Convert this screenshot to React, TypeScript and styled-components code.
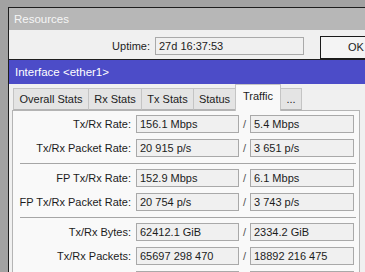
import React from 'react';
import styled, { createGlobalStyle } from 'styled-components';

const GlobalStyle = createGlobalStyle`
  html, body {
    margin: 0;
    padding: 0;
    background: #a2a2a2;
    overflow: hidden;
  }
  body {
    font-family: "Liberation Sans", Arial, sans-serif;
    font-size: 11px;
    color: #1c1c1c;
  }
`;

type Row = { label: string; tx: string; rx: string };

// last row only peeks in at the bottom edge, so its texts stay empty
const GROUPS: Row[][] = [
    [
        { label: 'Tx/Rx Rate:', tx: '156.1 Mbps', rx: '5.4 Mbps' },
        { label: 'Tx/Rx Packet Rate:', tx: '20 915 p/s', rx: '3 651 p/s' },
    ],
    [
        { label: 'FP Tx/Rx Rate:', tx: '152.9 Mbps', rx: '6.1 Mbps' },
        { label: 'FP Tx/Rx Packet Rate:', tx: '20 754 p/s', rx: '3 743 p/s' },
    ],
    [
        { label: 'Tx/Rx Bytes:', tx: '62412.1 GiB', rx: '2334.2 GiB' },
        { label: 'Tx/Rx Packets:', tx: '65697 298 470', rx: '18892 216 475' },
        { label: '', tx: '', rx: '' },
    ],
];

const TABS = ['Overall Stats', 'Rx Stats', 'Tx Stats', 'Status', 'Traffic', '...'];
const TAB_WIDTHS = [76, 54, 53, 43, 46, 22];

const Desktop = styled.div`
  position: relative;
  width: 365px;
  height: 272px;
  overflow: hidden;
`;

// windows sit on the desktop at their own coordinates
const Window = styled.div<{ left: number; top: number }>`
  position: absolute;
  left: ${({ left }) => left}px;
  top: ${({ top }) => top}px;
  width: 420px;
  height: 320px;
  border-top: 1px solid #1e1e1e;
  border-left: 1px solid #1e1e1e;
  background: #f0f0f0;
  display: flex;
  flex-direction: column;
`;

const TitleBar = styled.div<{ active?: boolean }>`
  height: ${({ active }) => active ? 24 : 22}px;
  display: flex;
  align-items: center;
  padding-left: ${({ active }) => active ? 6 : 5}px;
  background: ${({ active }) => active ? '#4c4cc8' : '#b7b7b7'};
  color: ${({ active }) => active ? '#ffffff' : '#f6f6f6'};
  font-size: 11.5px;
`;

const UptimeRow = styled.div`
  display: flex;
  align-items: flex-start;
  padding-top: 7px;
`;

const UptimeLabel = styled.div`
  width: 141px;
  margin-right: 5px;
  height: 18px;
  line-height: 18px;
  text-align: right;
`;

const Field = styled.div<{ width: number }>`
  box-sizing: border-box;
  width: ${({ width }) => width}px;
  height: 18px;
  line-height: 16px;
  padding-left: 3px;
  border: 1px solid #a9a9a9;
  background: #f0f0f0;
  white-space: nowrap;
  overflow: hidden;
`;

const OkButton = styled.div`
  box-sizing: border-box;
  margin-left: 16px;
  margin-top: -1px;
  width: 72px;
  height: 23px;
  line-height: 21px;
  text-align: center;
  border: 1px solid #1a1a1a;
  background: #f4f4f4;
`;

const Body = styled.div`
  display: flex;
  flex-direction: column;
  padding-left: 3px;
`;

const TabStrip = styled.div`
  display: flex;
  align-items: flex-end;
  height: 26px;
  padding-left: 1px;
  position: relative;
  z-index: 1;
`;

const Tab = styled.div<{ active?: boolean; width: number }>`
  box-sizing: border-box;
  width: ${({ width }) => width}px;
  height: ${({ active }) => active ? 27 : 22}px;
  margin-bottom: ${({ active }) => active ? -1 : 0}px;
  line-height: ${({ active }) => active ? 22 : 21}px;
  text-align: center;
  border: 1px solid #c4c4c4;
  border-bottom: ${({ active }) => active ? 'none' : '1px solid #b4b4b4'};
  margin-right: -1px;
  background: ${({ active }) => active ? '#f9f9f9' : '#e4e4e4'};
  white-space: nowrap;
`;

const Panel = styled.div`
  box-sizing: border-box;
  width: 348px;
  height: 200px;
  border: 1px solid #b4b4b4;
  border-bottom: none;
  background: #f9f9f9;
  padding-top: 4px;
  display: flex;
  flex-direction: column;
`;

const Group = styled.div`
  display: flex;
  flex-direction: column;
  gap: 6px;
`;

const StatRow = styled.div`
  display: flex;
  align-items: center;
`;

const Label = styled.div`
  width: 118px;
  margin-right: 5px;
  text-align: right;
  white-space: nowrap;
`;

const Slash = styled.div`
  width: 11px;
  text-align: center;
  color: #555;
`;

const Separator = styled.div`
  height: 1px;
  background: #a6a6a6;
  margin: 6px 3px 5px 7px;
`;

const App = () => {
    return (
        <>
            <GlobalStyle/>
            <Desktop>
                <Window left={8} top={7}>
                    <TitleBar>Resources</TitleBar>
                    <UptimeRow>
                        <UptimeLabel>Uptime:</UptimeLabel>
                        <Field width={149}>27d 16:37:53</Field>
                        <OkButton>OK</OkButton>
                    </UptimeRow>
                </Window>
                <Window left={8} top={59}>
                    <TitleBar active>Interface &lt;ether1&gt;</TitleBar>
                    <Body>
                        <TabStrip>
                            {TABS.map((tab, i) =>
                                <Tab key={tab} width={TAB_WIDTHS[i]} active={tab === 'Traffic'}>{tab}</Tab>
                            )}
                        </TabStrip>
                        <Panel>
                            {GROUPS.map((group, gi) =>
                                <React.Fragment key={gi}>
                                    {gi > 0 && <Separator/>}
                                    <Group>
                                        {group.map((row, ri) =>
                                            <StatRow key={ri}>
                                                <Label>{row.label}</Label>
                                                <Field width={103}>{row.tx}</Field>
                                                <Slash>{row.label && '/'}</Slash>
                                                <Field width={104}>{row.rx}</Field>
                                            </StatRow>
                                        )}
                                    </Group>
                                </React.Fragment>
                            )}
                        </Panel>
                    </Body>
                </Window>
            </Desktop>
        </>
    );
};

export default App;
